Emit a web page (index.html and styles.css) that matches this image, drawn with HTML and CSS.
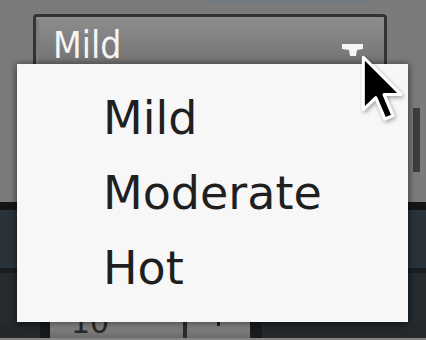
FILE: index.html
```html
<!DOCTYPE html>
<html lang="en">
<head>
  <meta charset="UTF-8" />
  <meta name="viewport" content="width=device-width, initial-scale=1.0"/>
  <title>Heat level</title>
  <link rel="stylesheet" href="styles.css">
</head>
<body>
  <div class="app">
    <!-- 顶部工具区 -->
    <div class="toolbar">
      <div class="strip"></div>
      <div class="select">
        <span class="select-value">Mild</span>
        <svg class="select-arrow" width="22" height="13" viewBox="0 0 22 13">
          <polygon points="0,0 21,0 21,5 15,6 14,12 8,12 7,6 0,5" fill="#f6f6f6"/>
        </svg>
      </div>
      <div class="scroll"></div>
    </div>

    <div class="band dark"></div>
    <div class="panel one"></div>
    <div class="band mid"></div>
    <div class="panel two"></div>

    <div class="bottom-row">
      <div class="cell c1"></div>
      <div class="cell c2"></div>
      <div class="cell field wide"><span class="num">10</span></div>
      <div class="cell sep"></div>
      <div class="cell field narrow"><span class="tick"></span></div>
      <div class="cell c3"></div>
      <div class="cell c4"></div>
    </div>
  </div>

  <!-- 下拉菜单 -->
  <ul class="menu">
    <li>Mild</li>
    <li>Moderate</li>
    <li>Hot</li>
  </ul>

  <svg class="cursor" width="46" height="72" viewBox="0 0 14 22">
    <defs>
      <filter id="soft" x="-50%" y="-50%" width="200%" height="200%">
        <feDropShadow dx="0.4" dy="0.6" stdDeviation="0.6" flood-color="#000" flood-opacity="0.35"/>
      </filter>
    </defs>
    <path d="M1,1 L1,17 L4.8,13.3 L7.6,19.8 L10,18.8 L7.3,12.4 L12.4,12.4 Z" fill="#000" stroke="#fff" stroke-width="0.9" stroke-linejoin="round" filter="url(#soft)"/>
  </svg>
</body>
</html>
```

FILE: styles.css
```css
* {
  margin: 0;
  padding: 0;
  box-sizing: border-box;
}
html, body {
  width: 426px;
  height: 340px;
  overflow: hidden;
  background: #7b7b7b;
  font-family: "DejaVu Sans", Verdana, sans-serif;
}
.app {
  display: flex;
  flex-direction: column;
  height: 340px;
}
.toolbar {
  height: 202px;
  display: flex;
  flex-direction: column;
  background: #7b7b7b;
}
.strip {
  margin-left: 205px;
  width: 165px;
  height: 3px;
  background: #6f7b80;
}
.select {
  margin: 11px 0 0 33px;
  width: 354px;
  height: 62px;
  border: 3px solid #333;
  border-radius: 4px;
  background: linear-gradient(#8d8d8d, #838383 35%, #7a7a7a 65%, #6c6c6c);
  box-shadow: inset 0 2px 0 #8f8f8f, inset 3px 0 0 #7c7c7c;
  display: flex;
  align-items: flex-start;
  justify-content: space-between;
  padding: 4px 20px 0 17px;
}
.select-value {
  font-family: "DejaVu Sans Condensed", "DejaVu Sans", sans-serif;
  font-size: 37px;
  line-height: 50px;
  color: #f5f5f5;
}
.select-arrow {
  margin-top: 23px;
}
.scroll {
  align-self: flex-end;
  margin: 32px 6px 0 0;
  width: 7px;
  height: 64px;
  background: #3d3d3d;
}
.band.dark {
  height: 8px;
  background: #161616;
}
.band.mid {
  height: 5px;
  background: #1a1e21;
}
.panel.one {
  height: 58px;
  background: #2b333a;
}
.panel.two {
  height: 49px;
  background: #252b2f;
}
.bottom-row {
  height: 18px;
  display: flex;
  border-bottom: 2px solid #858585;
  background: #24292c;
}
.cell.c1 { width: 40px; background: #23282b; }
.cell.c2 { width: 10px; background: #15191b; }
.cell.sep { width: 4px; background: #2c2c2c; }
.cell.c3 { width: 12px; background: #181c1e; }
.cell.c4 { flex: 1; background: #24292c; }
.cell.field {
  background: linear-gradient(#8e8e8e, #7a7a7a 60%, #6a6a6a);
}
.cell.wide {
  width: 133px;
  padding-left: 21px;
}
.cell.narrow {
  width: 63px;
  padding-left: 30px;
}
.num {
  display: block;
  margin-top: -8px;
  font-size: 30px;
  line-height: 18px;
  color: #2a2a2a;
}
.tick {
  display: block;
  width: 3px;
  height: 4px;
  background: #222;
}

/* 下拉菜单 */
.menu {
  position: absolute;
  left: 17px;
  top: 64px;
  width: 391px;
  height: 258px;
  list-style: none;
  background: #f7f7f7;
  box-shadow: 0 1px 7px 1px rgba(0, 0, 0, 0.5);
  padding: 17px 0 15px 86px;
}
.menu li {
  font-size: 46px;
  line-height: 75px;
  color: #1f1f1f;
}
.cursor {
  position: absolute;
  left: 360px;
  top: 54px;
}
```
